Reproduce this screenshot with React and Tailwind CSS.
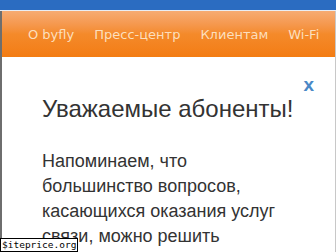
export default function App() {
  return (
    <div className="relative w-[336px] h-[252px] overflow-hidden bg-white">
      <div className="h-[10px] bg-[#2b6cc1]" />
      <div className="h-[1px] bg-[#e9eef5]" />
      <div className="border-l-2 border-r border-l-[#6e6e6e] border-r-[#c8c8c8] h-[241px]">
        <nav
          className="h-[46px] flex items-center pl-[26px] pt-[1px] gap-[20px] text-[13px] text-[#fcdfbd] bg-gradient-to-b from-[#f6ab72] via-[#f48a2a] to-[#f37c12]"
          style={{ fontFamily: '"DejaVu Sans", Verdana, sans-serif' }}
        >
          <span>O byfly</span>
          <span>Пресс-центр</span>
          <span>Клиентам</span>
          <span>Wi-Fi</span>
        </nav>
        <div
          className="pl-[40px] pr-[21px] text-[#333333]"
          style={{ fontFamily: '"Liberation Sans", Arial, sans-serif' }}
        >
          <div className="flex justify-end pt-[18px] h-[38px]">
            <span className="text-[19px] font-bold leading-[20px] text-[#4a88c6]">x</span>
          </div>
          <h1 className="text-[24px] leading-[28px] mt-[0px]">Уважаемые абоненты!</h1>
          <p className="text-[18px] leading-[25px] mt-[26px]">
            Напоминаем, что
            <br />
            большинство вопросов,
            <br />
            касающихся оказания услуг
            <br />
            связи, можно решить
          </p>
        </div>
      </div>
      <div
        className="absolute left-0 bottom-0 bg-white border border-black px-[1px] text-[9.5px] leading-[12px] text-black"
        style={{ fontFamily: '"DejaVu Sans Mono", monospace' }}
      >
        $iteprice.org
      </div>
    </div>
  );
}
